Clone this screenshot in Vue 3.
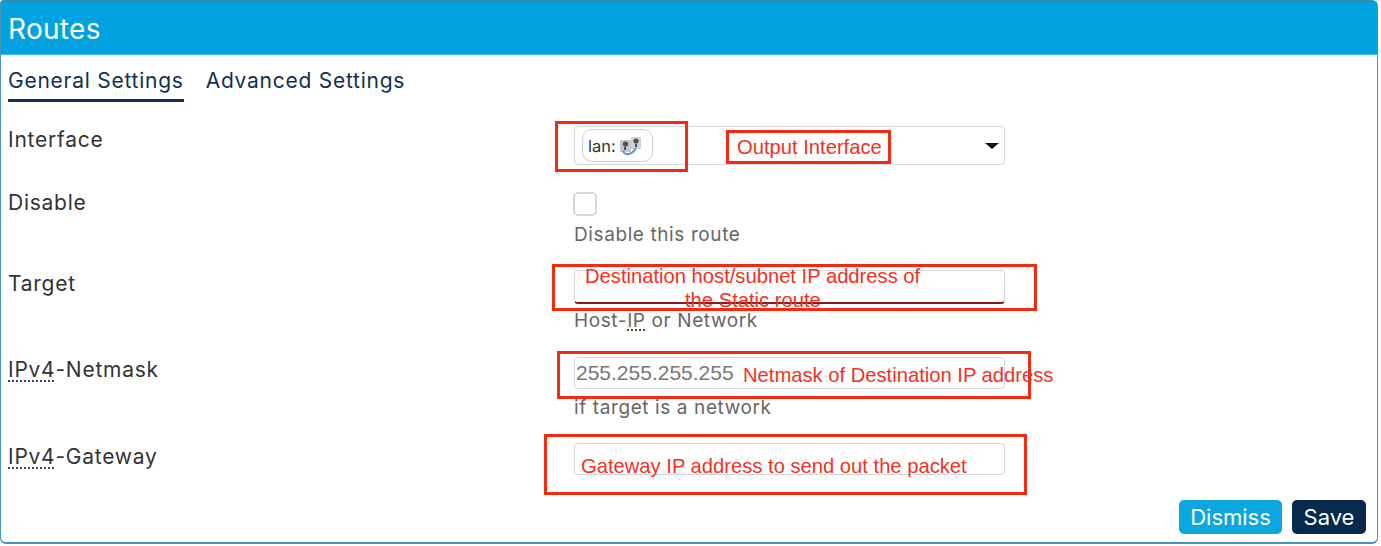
<script setup>
</script>

<template>
  <div class="page">
    <div class="modal">
      <header class="head">Routes</header>
      <nav class="tabs">
        <span class="tab active">General Settings</span>
        <span class="tab">Advanced Settings</span>
      </nav>
      <section class="form">
        <div class="row r-iface">
          <div class="label">Interface</div>
          <div class="field">
            <div class="input select">
              <span class="chip">lan:
                <svg class="net" width="23" height="20" viewBox="0 0 23 20">
                  <rect x="1" y="4" width="11" height="12" rx="1" fill="#c2c6cb" />
                  <rect x="12" y="1" width="10" height="12" rx="1" fill="#cfd2d6" />
                  <circle cx="6.5" cy="8" r="2.6" fill="#4d4f52" />
                  <circle cx="17" cy="5" r="2.6" fill="#4d4f52" />
                  <path d="M6 11v3M17 8v3" stroke="#4d4f52" stroke-width="2" />
                  <path d="M4 15 C6 20 13 19 17 12" fill="none" stroke="#5a8fd0" stroke-width="2" />
                </svg>
              </span>
              <svg class="caret" width="14" height="6" viewBox="0 0 14 6"><path d="M0 0h14L7 6z" fill="#111" /></svg>
            </div>
          </div>
        </div>
        <div class="row r-disable">
          <div class="label">Disable</div>
          <div class="field">
            <div class="check"></div>
            <div class="hint">Disable this route</div>
          </div>
        </div>
        <div class="row r-target">
          <div class="label">Target</div>
          <div class="field">
            <div class="input dark-edge"></div>
            <div class="hint">Host-<abbr>IP</abbr> or Network</div>
          </div>
        </div>
        <div class="row r-netmask">
          <div class="label"><abbr>IPv4</abbr>-Netmask</div>
          <div class="field">
            <div class="input placeholder">255.255.255.255</div>
            <div class="hint">if target is a network</div>
          </div>
        </div>
        <div class="row r-gateway">
          <div class="label"><abbr>IPv4</abbr>-Gateway</div>
          <div class="field">
            <div class="input"></div>
          </div>
        </div>
      </section>
      <footer class="foot">
        <button class="btn dismiss">Dismiss</button>
        <button class="btn save">Save</button>
      </footer>
    </div>

    <div class="box b1"></div>
    <div class="box b2 note">Output Interface</div>
    <div class="box b3"></div>
    <div class="note t1">Destination host/subnet IP address of</div>
    <div class="note t2">the Static route</div>
    <div class="box b4"></div>
    <div class="note t3">Netmask of Destination IP address</div>
    <div class="box b5"></div>
    <div class="note t4">Gateway IP address to send out the packet</div>
  </div>
</template>

<style>
html, body { margin: 0; background: #fff; }
</style>

<style scoped>
.page {
  position: relative;
  width: 1381px;
  height: 546px;
  overflow: hidden;
  background: #fff;
  font-family: Inter, "Liberation Sans", sans-serif;
}
.modal {
  width: 1378px;
  height: 544px;
  box-sizing: border-box;
  border: 1px solid #4a93b8;
  border-top: 2px solid #3f86a8;
  border-bottom: 2px solid #4a93b8;
  border-radius: 4px 6px 6px 6px;
  display: flex;
  flex-direction: column;
}
.head {
  height: 53px;
  background: #00a3e0;
  border-bottom: 1px solid #3dbbea;
  box-sizing: border-box;
  color: #fff;
  font-size: 28px;
  line-height: 54px;
  padding-left: 7px;
  letter-spacing: 0.3px;
}
.tabs {
  display: flex;
  gap: 22px;
  padding: 10px 0 0 7px;
  height: 36px;
  color: #12304f;
  font-size: 21px;
  letter-spacing: 0.75px;
}
.tab { height: 37px; line-height: 32px; box-sizing: border-box; }
.tab.active { border-bottom: 3px solid #12304f; }
.form { flex: 1; padding-left: 7px; position: relative; }
.row { display: flex; box-sizing: border-box; }
.label {
  width: 566px;
  color: #333;
  font-size: 21px;
  letter-spacing: 0.75px;
  line-height: 28px;
}
.field { width: 431px; }
abbr { text-decoration: underline dotted #444; text-underline-offset: 3px; }
.input {
  height: 32px;
  box-sizing: border-box;
  border: 1px solid #d3d8e0;
  border-radius: 4px;
  background: #fff;
}
.select {
  height: 39px;
  display: flex;
  align-items: center;
  justify-content: space-between;
  padding: 0 5px 0 7px;
}
.chip {
  display: flex;
  align-items: center;
  gap: 3px;
  height: 33px;
  width: 71px;
  box-sizing: border-box;
  padding-left: 5px;
  border: 1px solid #c6d0dc;
  border-radius: 10px;
  font-size: 16.5px;
  color: #333;
}
.check {
  width: 24px;
  height: 24px;
  margin-left: -1px;
  box-sizing: border-box;
  border: 2px solid #d3d8e0;
  border-radius: 5px;
}
.hint { color: #666; font-size: 19px; letter-spacing: 0.6px; line-height: 20px; }
.dark-edge { height: 34px; border-bottom: 2px solid #8b1a1a; }
.placeholder {
  color: #777;
  font-family: "Liberation Sans", sans-serif;
  font-size: 21px;
  line-height: 30px;
  padding-left: 1px;
}
.r-iface { padding-top: 25px; height: 88px; }
.r-disable { height: 81px; }
.r-disable .check { margin-top: 3px; }
.r-disable .hint { margin-top: 9px; }
.r-target { height: 86px; }
.r-target .hint { margin-top: 7px; }
.r-netmask { height: 87px; }
.r-netmask .input { margin-top: 1px; }
.r-netmask .hint { margin-top: 9px; }
.foot { display: flex; justify-content: flex-end; gap: 10px; padding: 0 11px 8px 0; }
.btn {
  height: 34px;
  border: 0;
  border-radius: 5px;
  color: #fff;
  font-family: inherit;
  font-size: 22px;
  padding: 0;
}
.dismiss { width: 103px; background: #0ca6e0; }
.save { width: 74px; background: #06294c; }
.note {
  position: absolute;
  color: #f5301e;
  font-family: "Liberation Sans", sans-serif;
  font-size: 20.2px;
  line-height: 20px;
  white-space: nowrap;
}
.box { position: absolute; box-sizing: border-box; border: 3px solid #f52a10; }
.b1 { left: 555px; top: 121px; width: 133px; height: 51px; }
.b2 { left: 726px; top: 130px; width: 165px; height: 34px; padding-left: 8px; line-height: 28px; }
.b3 { left: 552px; top: 264px; width: 485px; height: 47px; }
.b4 { left: 557px; top: 351px; width: 474px; height: 48px; }
.b5 { left: 544px; top: 434px; width: 483px; height: 61px; }
.t1 { left: 585px; top: 266px; }
.t2 { left: 685px; top: 290px; }
.t3 { left: 743px; top: 365px; }
.t4 { left: 581px; top: 456px; }
</style>
